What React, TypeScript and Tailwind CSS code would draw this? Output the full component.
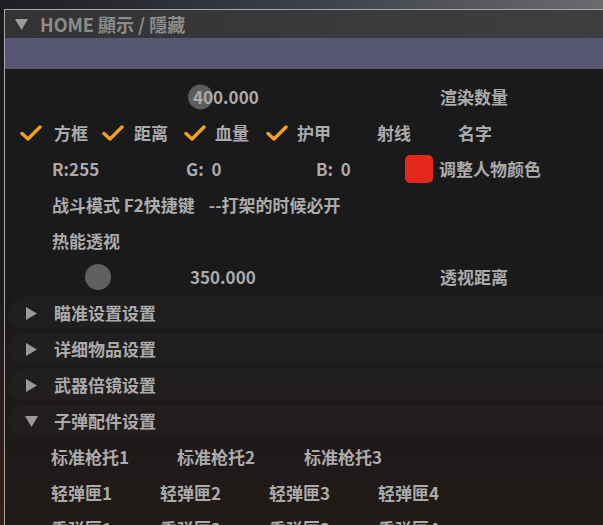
import React from 'react'

const FONT = { fontFamily: '"Noto Sans CJK SC", "Noto Sans", sans-serif' }

function Check() {
  return (
    <svg width="22" height="16" viewBox="0 0 22 16" className="shrink-0">
      <path d="M2 8.5 L8 14 L20 2" fill="none" stroke="#f0a11e" strokeWidth="3.4" strokeLinecap="round" strokeLinejoin="round" />
    </svg>
  )
}

function Arrow({ open }: { open?: boolean }) {
  return (
    <svg width="13" height="13" viewBox="0 0 13 13" className="shrink-0">
      {open ? <polygon points="0,1 13,1 6.5,12" fill="#9a9a9a" /> : <polygon points="1,0 12,6.5 1,13" fill="#9a9a9a" />}
    </svg>
  )
}

function Row({ children, className = '' }: { children?: React.ReactNode; className?: string }) {
  return <div className={`flex h-[36px] items-center ${className}`}>{children}</div>
}

function TreeNode({ label, open }: { label: string; open?: boolean }) {
  return (
    <div className="flex h-[36px] items-center">
      <div className="mx-[3px] flex h-[32px] flex-1 items-center gap-[16px] rounded-full bg-white/[0.02] pl-[17px]">
        <Arrow open={open} />
        <span>{label}</span>
      </div>
    </div>
  )
}

export default function App() {
  return (
    <div
      className="relative h-[525px] w-[603px] overflow-hidden bg-[linear-gradient(180deg,#1b1b1f_0%,#1a1a1d_50%,#3a1f18_100%)]"
      style={FONT}
    >
      <div className="absolute inset-x-0 top-0 h-[9px] bg-[linear-gradient(90deg,#1d1d22_0%,#3c3f48_50%,#6b6b6e_100%)]" />
      <div className="relative ml-[4px] mt-[9px] h-[516px] w-[620px] border-l border-t border-[#a9a9a9] bg-[linear-gradient(180deg,#19191b_0%,#1b1a1b_55%,#211a19_100%)]">
        <div className="flex h-[28px] items-center gap-[12px] bg-[linear-gradient(90deg,#333335_0%,#3b3b3d_60%,#3e3e40_100%)] pl-[10px] text-[18px] font-bold text-[#8c8c8c]">
          <Arrow open />
          <span>HOME 顯示 / 隱藏</span>
        </div>
        <div className="h-[31px] bg-[#575773]" />
        <div className="pt-[10px] text-[17px] font-bold text-[#ababab]">
          <Row>
            <div className="relative ml-[183px] w-[252px]">
              <div className="absolute left-[0px] top-1/2 h-[25px] w-[25px] -translate-y-1/2 rounded-full bg-[#5c5c5e]" />
              <span className="relative ml-[5px]">400.000</span>
            </div>
            <span>渲染数量</span>
          </Row>
          <Row className="pl-[15px]">
            <div className="flex w-[82px] items-center gap-[12px]"><Check /><span>方框</span></div>
            <div className="flex w-[82px] items-center gap-[10px]"><Check /><span>距离</span></div>
            <div className="flex w-[82px] items-center gap-[9px]"><Check /><span>血量</span></div>
            <div className="flex w-[111px] items-center gap-[9px]"><Check /><span>护甲</span></div>
            <span className="w-[81px]">射线</span>
            <span>名字</span>
          </Row>
          <Row className="pl-[47px]">
            <span className="w-[134px]">R:255</span>
            <span className="w-[130px]">G:&nbsp; 0</span>
            <span className="w-[89px]">B:&nbsp; 0</span>
            <div className="mr-[6px] h-[28px] w-[28px] rounded-[5px] bg-[#e5281c]" />
            <span>调整人物颜色</span>
          </Row>
          <Row className="gap-[14px] pl-[47px]">
            <span>战斗模式 F2快捷键</span>
            <span>--打架的时候必开</span>
          </Row>
          <Row className="pl-[47px]">
            <span>热能透视</span>
          </Row>
          <Row className="pl-[80px]">
            <div className="h-[26px] w-[26px] rounded-full bg-[#606062]" />
            <span className="ml-[79px] w-[250px]">350.000</span>
            <span>透视距离</span>
          </Row>
          <TreeNode label="瞄准设置设置" />
          <TreeNode label="详细物品设置" />
          <TreeNode label="武器倍镜设置" />
          <TreeNode label="子弹配件设置" open />
          <Row className="pl-[46px]">
            <span className="w-[126px]">标准枪托1</span>
            <span className="w-[127px]">标准枪托2</span>
            <span>标准枪托3</span>
          </Row>
          <Row className="pl-[46px]">
            <span className="w-[109px]">轻弹匣1</span>
            <span className="w-[109px]">轻弹匣2</span>
            <span className="w-[109px]">轻弹匣3</span>
            <span>轻弹匣4</span>
          </Row>
          <Row className="pl-[46px]">
            <span className="w-[109px]">重弹匣1</span>
            <span className="w-[109px]">重弹匣2</span>
            <span className="w-[109px]">重弹匣3</span>
            <span>重弹匣4</span>
          </Row>
        </div>
      </div>
    </div>
  )
}
